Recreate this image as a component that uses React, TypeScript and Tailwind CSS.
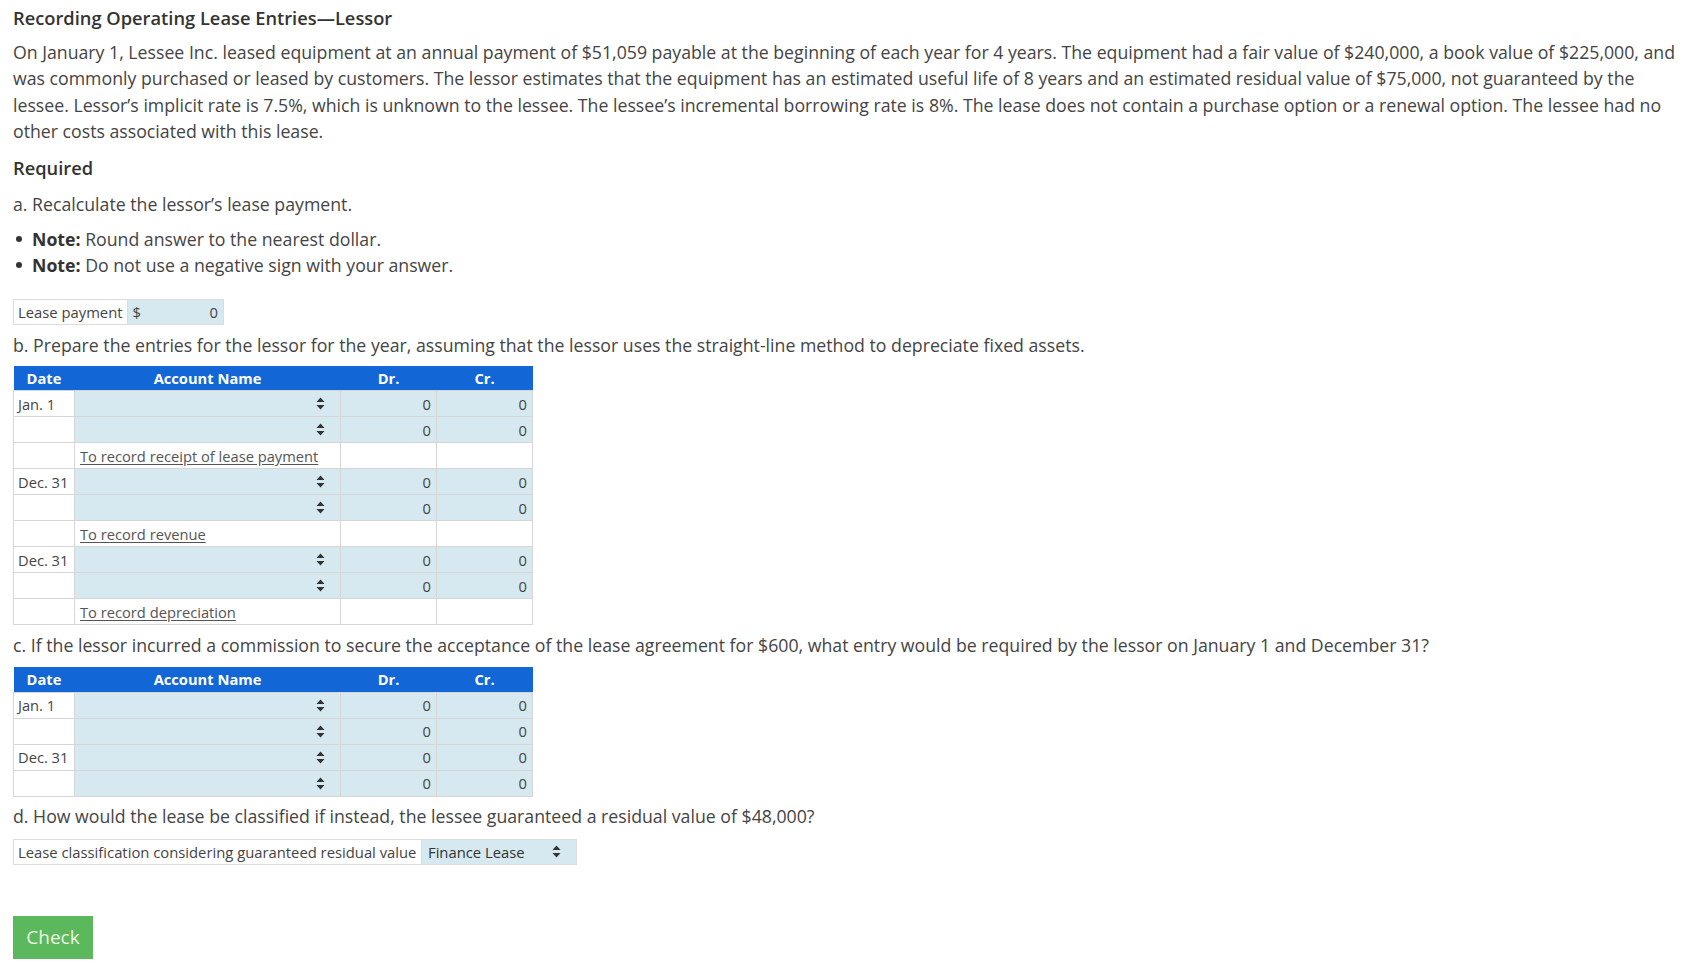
import React from 'react';

const font = { fontFamily: '"Open Sans", "Noto Sans", sans-serif' };

function Arrows() {
  return (
    <svg width="9" height="13" viewBox="0 0 9 13" className="shrink-0">
      <path d="M4.5 0.5 L8.5 5 L0.5 5 Z" fill="#333" />
      <path d="M4.5 12.5 L8.5 8 L0.5 8 Z" fill="#333" />
    </svg>
  );
}

type Row = { date?: string; memo?: string };

function EntryTable({ rows }: { rows: Row[] }) {
  return (
    <table className="border-collapse text-[14.7px] text-[#444] w-[519px] table-fixed">
      <colgroup>
        <col className="w-[61px]" />
        <col className="w-[266px]" />
        <col className="w-[96px]" />
        <col className="w-[96px]" />
      </colgroup>
      <thead>
        <tr className="bg-[#1266d6] text-white h-[25px]">
          <th className="font-bold text-center py-0">Date</th>
          <th className="font-bold text-center py-0">Account Name</th>
          <th className="font-bold text-center py-0">Dr.</th>
          <th className="font-bold text-center py-0">Cr.</th>
        </tr>
      </thead>
      <tbody>
        {rows.map((r, i) =>
          r.memo ? (
            <tr key={i} className="h-[26px]">
              <td className="border border-[#d6d6d6]"></td>
              <td className="border border-[#d6d6d6] px-[5px]">
                <span className="underline underline-offset-2 text-[#555]">{r.memo}</span>
              </td>
              <td className="border border-[#d6d6d6]"></td>
              <td className="border border-[#d6d6d6]"></td>
            </tr>
          ) : (
            <tr key={i} className="h-[26px]">
              <td className="border border-[#d6d6d6] px-[4px]">{r.date}</td>
              <td className="border border-[#d6d6d6] bg-[#d6e9f1] pr-[15px]">
                <div className="flex justify-end"><Arrows /></div>
              </td>
              <td className="border border-[#d6d6d6] bg-[#d6e9f1] text-right pr-[5px]">0</td>
              <td className="border border-[#d6d6d6] bg-[#d6e9f1] text-right pr-[5px]">0</td>
            </tr>
          )
        )}
      </tbody>
    </table>
  );
}

export default function App() {
  const tableB: Row[] = [
    { date: 'Jan. 1' },
    {},
    { memo: 'To record receipt of lease payment' },
    { date: 'Dec. 31' },
    {},
    { memo: 'To record revenue' },
    { date: 'Dec. 31' },
    {},
    { memo: 'To record depreciation' },
  ];
  const tableC: Row[] = [{ date: 'Jan. 1' }, {}, { date: 'Dec. 31' }, {}];

  return (
    <div style={font} className="bg-white min-h-[980px] pl-[13px] pr-[10px] text-[#444]">
      <h1 className="text-[18.3px] font-semibold text-[#333] leading-[26px] pt-[5px]">
        Recording Operating Lease Entries—Lessor
      </h1>
      <p className="text-[17.72px] leading-[26.4px] mt-[8px]">
        On January 1, Lessee Inc. leased equipment at an annual payment of $51,059 payable at the beginning of each year for 4 years. The equipment had a fair value of $240,000, a book value of $225,000, and was commonly purchased or leased by customers. The lessor estimates that the equipment has an estimated useful life of 8 years and an estimated residual value of $75,000, not guaranteed by the lessee. Lessor’s implicit rate is 7.5%, which is unknown to the lessee. The lessee’s incremental borrowing rate is 8%. The lease does not contain a purchase option or a renewal option. The lessee had no other costs associated with this lease.
      </p>
      <h2 className="text-[18.3px] font-semibold text-[#333] leading-[26px] mt-[10px]">Required</h2>
      <p className="text-[17.72px] leading-[26px] mt-[10px]">a. Recalculate the lessor’s lease payment.</p>
      <ul className="text-[17.72px] leading-[26px] mt-[9px]">
        <li className="flex items-center">
          <span className="w-[19px] pl-[3px] flex">
            <span className="w-[6px] h-[6px] rounded-full bg-[#333]"></span>
          </span>
          <span><b className="font-bold text-[#333]">Note:</b> Round answer to the nearest dollar.</span>
        </li>
        <li className="flex items-center">
          <span className="w-[19px] pl-[3px] flex">
            <span className="w-[6px] h-[6px] rounded-full bg-[#333]"></span>
          </span>
          <span><b className="font-bold text-[#333]">Note:</b> Do not use a negative sign with your answer.</span>
        </li>
      </ul>
      <div className="flex mt-[21px] h-[26px] w-[211px] border border-[#dcdcdc] text-[14.8px]">
        <div className="px-[4px] flex items-center border-r border-[#dcdcdc]">Lease payment</div>
        <div className="flex-1 bg-[#d6e9f1] flex items-center justify-between px-[5px]">
          <span>$</span>
          <span>0</span>
        </div>
      </div>
      <p className="text-[17.72px] leading-[26px] mt-[7px]">
        b. Prepare the entries for the lessor for the year, assuming that the lessor uses the straight-line method to depreciate fixed assets.
      </p>
      <div className="mt-[8px]">
        <EntryTable rows={tableB} />
      </div>
      <p className="text-[17.72px] leading-[26px] mt-[7px]">
        c. If the lessor incurred a commission to secure the acceptance of the lease agreement for $600, what entry would be required by the lessor on January 1 and December 31?
      </p>
      <div className="mt-[9px]">
        <EntryTable rows={tableC} />
      </div>
      <p className="text-[17.72px] leading-[26px] mt-[6px]">
        d. How would the lease be classified if instead, the lessee guaranteed a residual value of $48,000?
      </p>
      <div className="flex mt-[10px] h-[26px] w-[564px] border border-[#dcdcdc] text-[14.8px]">
        <div className="px-[4px] flex items-center border-r border-[#dcdcdc] w-[408px]">
          Lease classification considering guaranteed residual value
        </div>
        <div className="flex-1 bg-[#d6e9f1] flex items-center justify-between pl-[6px] pr-[15px] text-[#333]">
          <span>Finance Lease</span>
          <Arrows />
        </div>
      </div>
      <button className="mt-[51px] w-[80px] h-[43px] bg-[#5cb85c] text-[#eaf7e4] text-[19px]">
        Check
      </button>
    </div>
  );
}
